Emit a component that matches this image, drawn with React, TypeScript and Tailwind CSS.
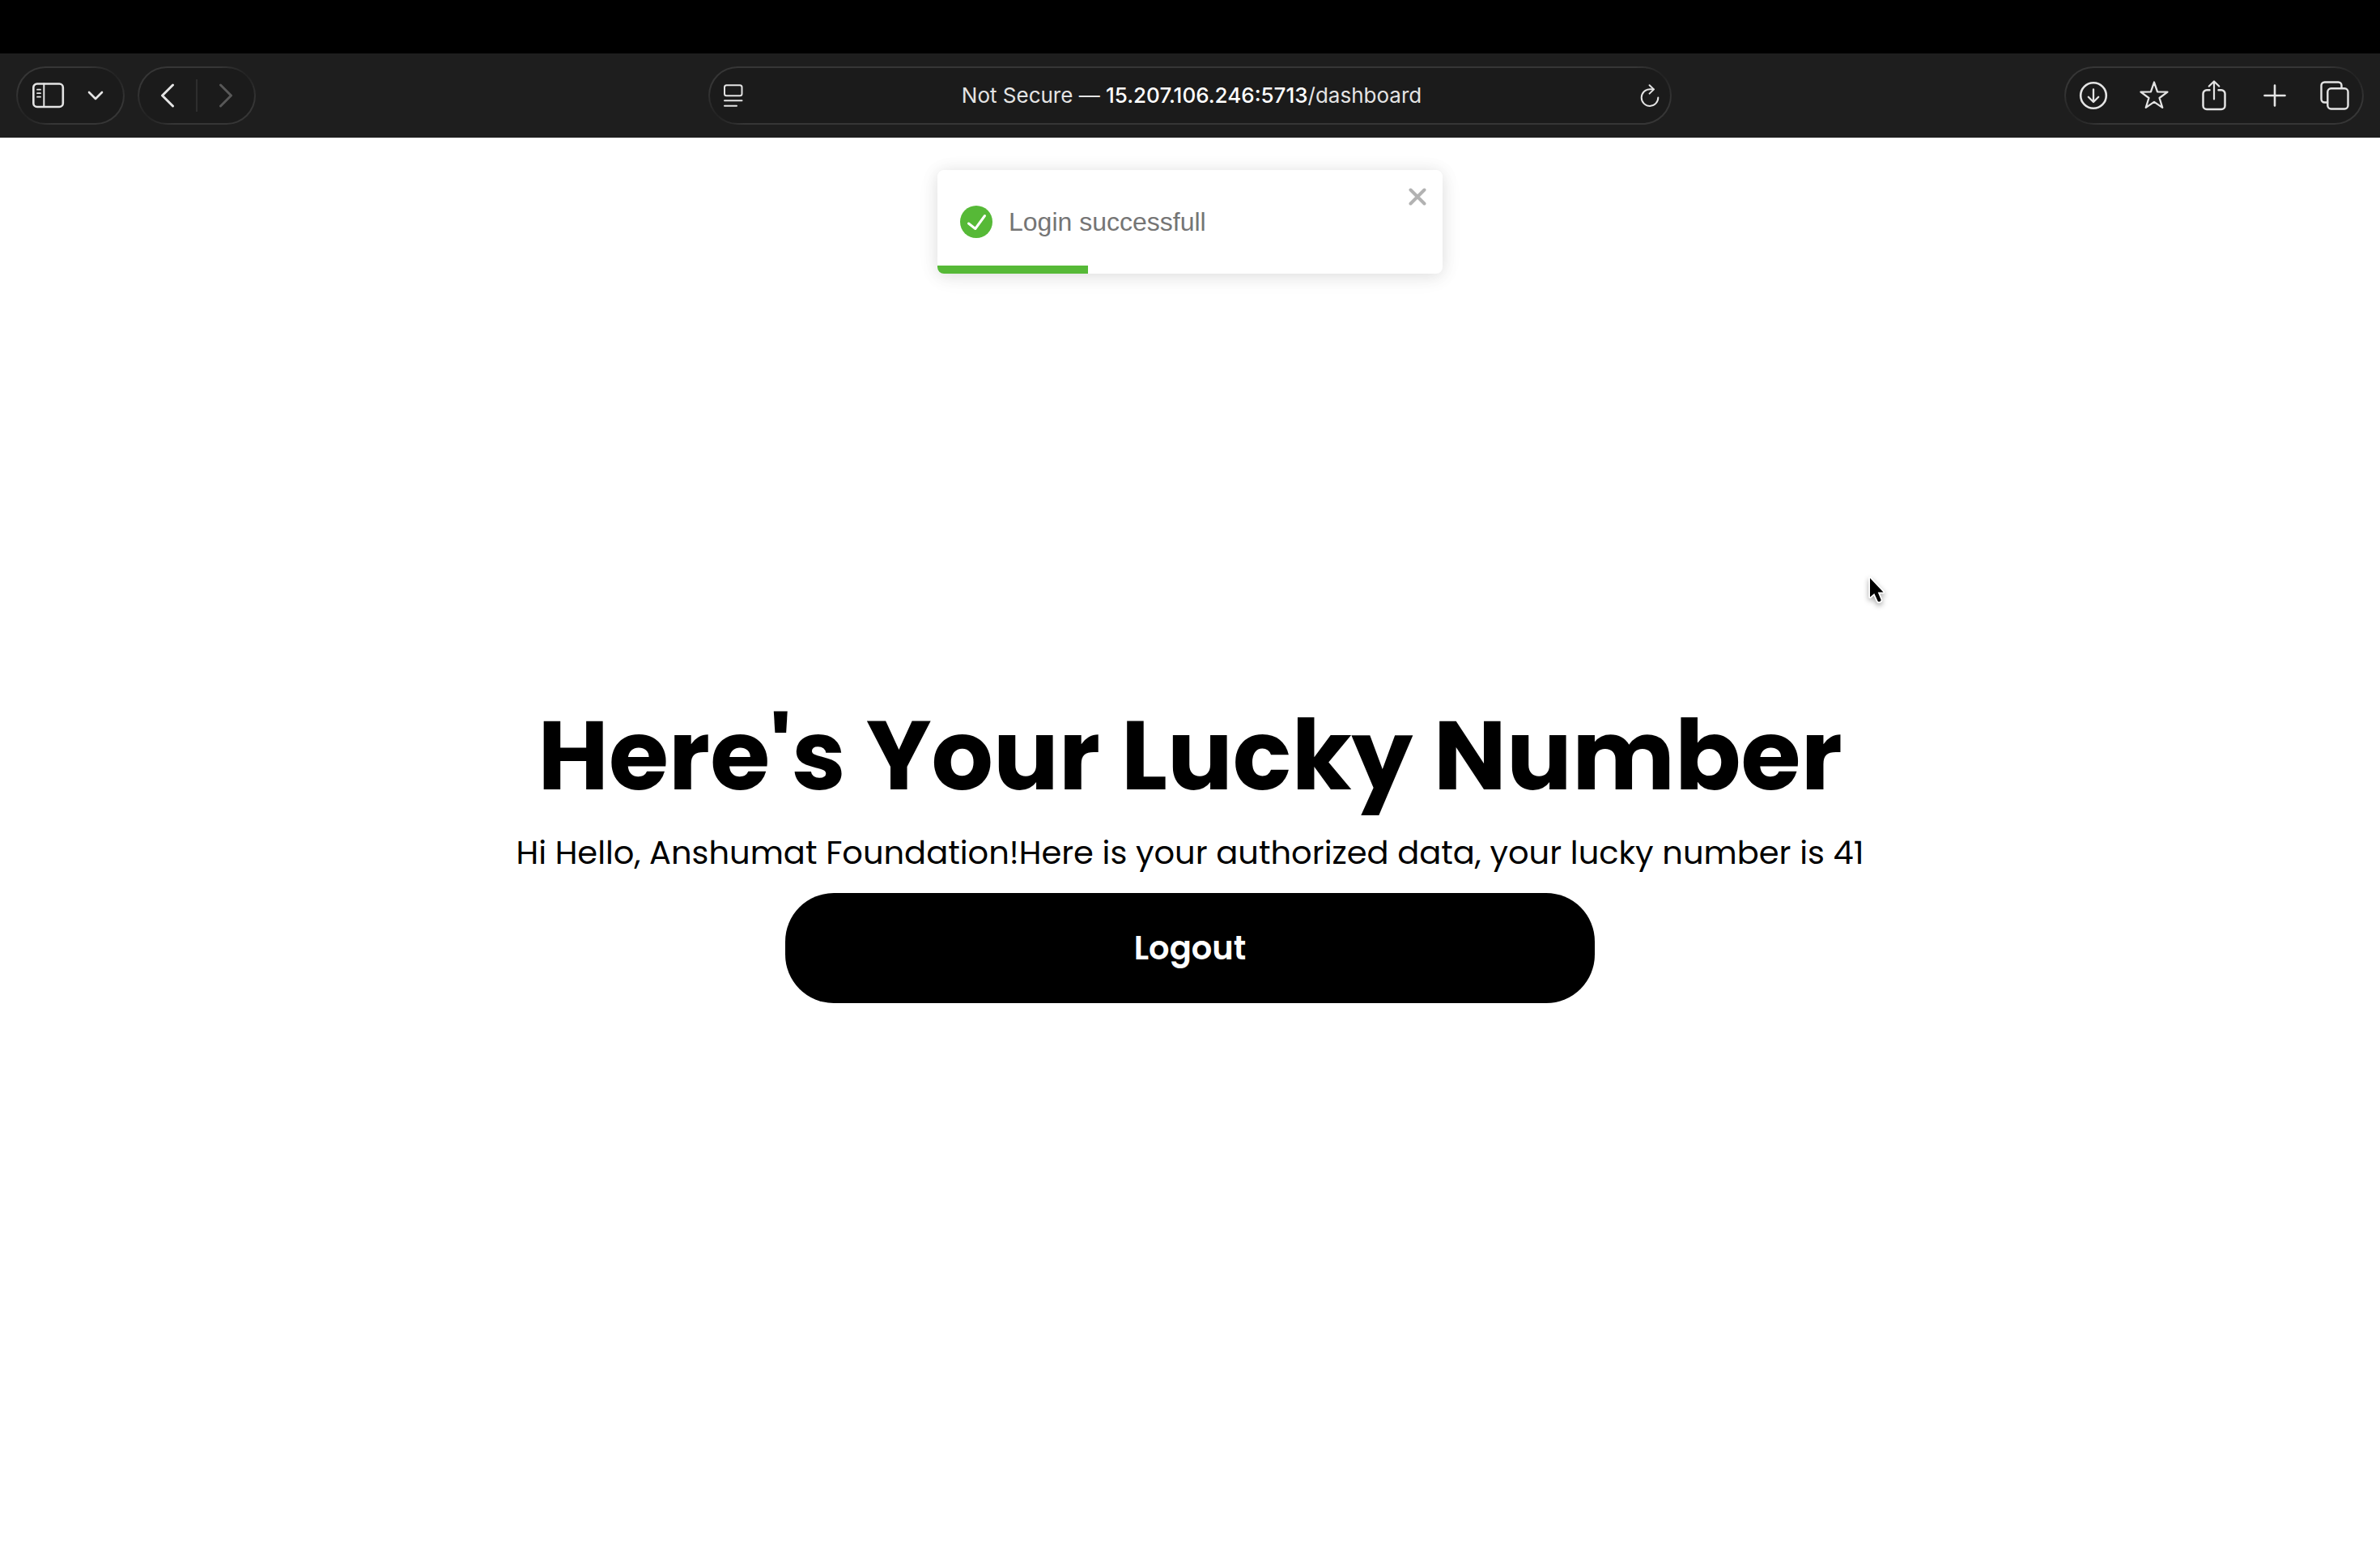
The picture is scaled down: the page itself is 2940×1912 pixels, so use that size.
import type { ReactNode } from "react";

const pill =
  "flex h-[72px] items-center rounded-full border-2 border-transparent [background:linear-gradient(#1b1b1b,#1b1b1b)_padding-box,radial-gradient(circle_at_calc(100%-10px)_10px,#222222,transparent_36px)_border-box,radial-gradient(circle_at_10px_calc(100%-10px),#222222,transparent_36px)_border-box,linear-gradient(#363636,#363636)_border-box]";

function IconButton({
  label,
  className = "",
  children,
}: {
  label: string;
  className?: string;
  children: ReactNode;
}) {
  return (
    <button
      type="button"
      aria-label={label}
      className={`flex h-10 shrink-0 items-center justify-center ${className}`}
    >
      {children}
    </button>
  );
}

const stroke = {
  fill: "none",
  stroke: "currentColor",
  strokeWidth: 2.6,
  strokeLinecap: "round" as const,
  strokeLinejoin: "round" as const,
};

function SidebarIcon() {
  return (
    <svg width="40" height="32" viewBox="0 0 40 32" {...stroke}>
      <rect x="1.3" y="1.5" width="36.5" height="28.5" rx="4.5" />
      <path d="M14.3 1.5V30" strokeWidth="2" />
      <path d="M6 8.7h4M6 13.2h4M6 17.7h4" strokeWidth="1.8" />
    </svg>
  );
}

function ReaderIcon() {
  return (
    <svg width="24" height="28" viewBox="0 0 24 28" {...stroke} strokeWidth={2}>
      <rect x="1" y="1.3" width="21.5" height="13" rx="2.5" />
      <path d="M1 20.2h21.5M1 26.7h15" />
    </svg>
  );
}

function ReloadIcon() {
  return (
    <svg width="24" height="28" viewBox="0 0 24 28" {...stroke} strokeWidth={2}>
      <path d="M22.3 16.6A10.3 10.3 0 1 1 12 6.3h4.5" />
      <path d="M11.6 1.2l5.4 5.2-5.4 5.2" />
    </svg>
  );
}

function DownloadIcon() {
  return (
    <svg width="36" height="36" viewBox="0 0 36 36" {...stroke}>
      <circle cx="18" cy="18" r="15.8" />
      <path d="M18 10.3v15.5M11.8 19.8l6.2 6.2 6.2-6.2" strokeWidth="2.3" />
    </svg>
  );
}

function StarIcon() {
  return (
    <svg width="38" height="38" viewBox="0 0 38 38" {...stroke} strokeWidth={2.4}>
      <path d="M19 1.6l4.3 12.5 13.1.2-10.5 7.9 3.9 12.5L19 27.3 8.200 34.700l3.900-12.500L1.600 14.300l13.100-.2z" />
    </svg>
  );
}

function ShareIcon() {
  return (
    <svg width="30" height="38" viewBox="0 0 30 38" {...stroke} strokeWidth={2.5}>
      <path d="M9.5 12.3H6a4.5 4.5 0 0 0-4.5 4.5v14.7A4.5 4.5 0 0 0 6 36h18a4.5 4.5 0 0 0 4.5-4.5V16.8A4.5 4.5 0 0 0 24 12.3h-3.5" />
      <path d="M15 23.5V1.7M8.8 7.5L15 1.5l6.2 6" strokeWidth="2.2" />
    </svg>
  );
}

function PlusIcon() {
  return (
    <svg width="28" height="28" viewBox="0 0 28 28" {...stroke}>
      <path d="M14 1.5v25M1.5 14h25" />
    </svg>
  );
}

function TabsIcon() {
  return (
    <svg width="36" height="36" viewBox="0 0 36 36" {...stroke} strokeWidth={2.4}>
      <path d="M9 26.5H5.5A4 4 0 0 1 1.5 22.5v-17a4 4 0 0 1 4-4h17a4 4 0 0 1 4 4V8" />
      <rect x="9.3" y="9.3" width="25.2" height="25.2" rx="4.2" />
    </svg>
  );
}

function BrowserBar() {
  return (
    <header className="bg-black pt-[66px] text-[#e4e4e4]">
      <div className="grid h-[104px] grid-cols-[1fr_1190px_1fr] items-center bg-[#1e1e1e] px-5">
        <nav aria-label="Navigation" className="flex gap-4">
          <div className={`${pill} w-[134px] justify-between pr-6 pl-[18px]`}>
            <IconButton label="Show sidebar">
              <SidebarIcon />
            </IconButton>
            <IconButton label="Tab groups">
              <svg width="20" height="12" viewBox="0 0 20 12" {...stroke}>
                <path d="M2 2l8 8 8-8" />
              </svg>
            </IconButton>
          </div>
          <div className={`${pill} w-[146px] justify-between px-[26px]`}>
            <IconButton label="Back">
              <svg width="18" height="30" viewBox="0 0 18 30" {...stroke} strokeWidth={3}>
                <path d="M15.5 2L2.5 15l13 13" />
              </svg>
            </IconButton>
            <span className="h-10 w-[2px] bg-[#2e2e2e]" />
            <IconButton label="Forward" className="text-[#585858]">
              <svg width="18" height="30" viewBox="0 0 18 30" {...stroke} strokeWidth={3}>
                <path d="M2.5 2l13 13-13 13" />
              </svg>
            </IconButton>
          </div>
        </nav>

        <div className={`${pill} justify-between pr-[13px] pl-[17px]`}>
          <IconButton label="Page menu">
            <ReaderIcon />
          </IconButton>
          <p className="font-['Inter',sans-serif] text-[26px] leading-8 whitespace-nowrap">
            Not Secure — <span className="font-medium text-white">15.207.106.246:5713</span>
            /dashboard
          </p>
          <IconButton label="Reload">
            <ReloadIcon />
          </IconButton>
        </div>

        <div className={`${pill} w-[370px] justify-between justify-self-end px-4`}>
          <IconButton label="Downloads" className="w-9">
            <DownloadIcon />
          </IconButton>
          <IconButton label="Bookmark" className="w-9">
            <StarIcon />
          </IconButton>
          <IconButton label="Share" className="w-9">
            <ShareIcon />
          </IconButton>
          <IconButton label="New tab" className="w-9">
            <PlusIcon />
          </IconButton>
          <IconButton label="Show tabs" className="w-9">
            <TabsIcon />
          </IconButton>
        </div>
      </div>
    </header>
  );
}

function Toast() {
  return (
    <div
      role="alert"
      className="absolute top-10 left-1/2 flex h-32 w-[624px] -translate-x-1/2 items-center gap-5 overflow-hidden rounded-lg bg-white px-7 shadow-[0_2px_20px_rgba(0,0,0,0.1),0_4px_30px_rgba(0,0,0,0.05)]"
    >
      <svg width="40" height="40" viewBox="0 0 40 40" className="shrink-0">
        <circle cx="20" cy="20" r="20" fill="#56b937" />
        <path
          d="M10.5 22l8.3 6.5L30.5 12.5"
          fill="none"
          stroke="#fff"
          strokeWidth="3"
          strokeLinecap="round"
          strokeLinejoin="round"
        />
      </svg>
      <p className="font-['Liberation_Sans',sans-serif] text-[32px] leading-10 text-[#757575]">
        Login successfull
      </p>
      <button
        type="button"
        aria-label="Close"
        className="absolute top-[22px] right-5 text-[#b2b2b2]"
      >
        <svg width="22" height="22" viewBox="0 0 22 22">
          <path
            d="M2.500 2.500l17 17M19.500 2.500l-17 17"
            stroke="currentColor"
            strokeWidth="4"
            strokeLinecap="round"
          />
        </svg>
      </button>
      <div className="absolute bottom-0 left-0 h-[10px] w-[186px] bg-[#56b937]" />
    </div>
  );
}

function Cursor() {
  return (
    <svg
      width="32"
      height="44"
      viewBox="0 0 32 44"
      className="absolute top-[537px] left-[2304px] drop-shadow-[0_3px_3px_rgba(0,0,0,0.35)]"
      aria-hidden="true"
    >
      <path
        d="M6 7v23.500l5.300-4.500 4.200 9.300c.9 2 4.900.4 4-1.700L15.700 24.500h6.800z"
        fill="#000"
        stroke="#fff"
        strokeWidth="3.5"
        strokeLinejoin="round"
        paintOrder="stroke"
      />
    </svg>
  );
}

export default function App() {
  return (
    <div className="flex min-h-screen flex-col bg-white">
      <BrowserBar />
      <main className="relative flex flex-1 flex-col items-center justify-center overflow-hidden font-['Poppins','Inter',sans-serif] text-black">
        <Toast />
        <h1 className="text-[120px] leading-[180px] font-bold whitespace-nowrap">
          Here's Your Lucky Number
        </h1>
        <p className="text-[40px] leading-[60px] whitespace-nowrap">
          Hi Hello, Anshumat Foundation!Here is your authorized data, your lucky number is 41
        </p>
        <button
          type="button"
          className="mt-5 h-[136px] w-[1000px] rounded-[60px] bg-black text-[40px] font-semibold text-white"
        >
          Logout
        </button>
        <Cursor />
      </main>
    </div>
  );
}
